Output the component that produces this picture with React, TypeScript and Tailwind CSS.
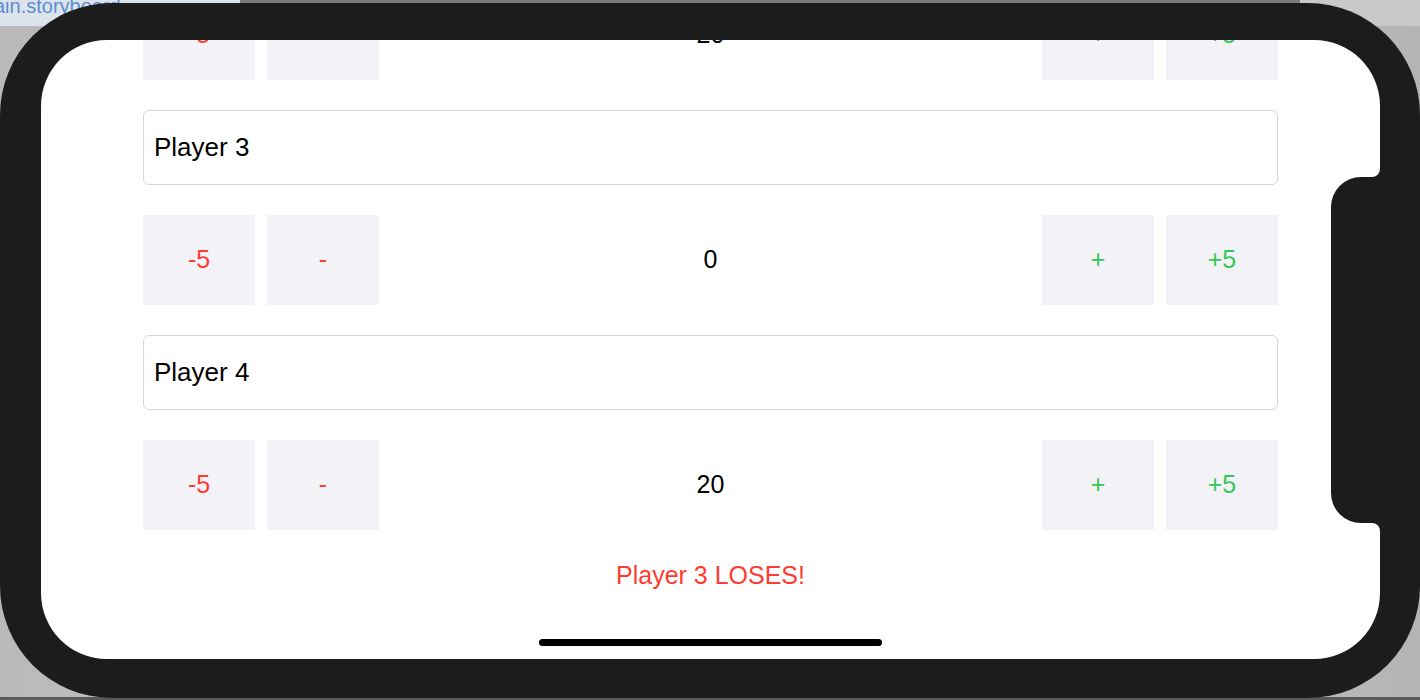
import { useState } from "react";

type Player = { name: string; life: number };

const CounterRow = ({ life }: { life: number }) => {
    return (
        <div className="flex h-[90px] items-stretch gap-3">
            <button className="w-[112px] bg-[#f2f2f7] text-[25px] text-[#ff3b30]">-5</button>
            <button className="w-[112px] bg-[#f2f2f7] text-[25px] text-[#ff3b30]">-</button>
            <div className="flex flex-1 items-center justify-center text-[25px] text-black">{life}</div>
            <button className="w-[112px] bg-[#f2f2f7] text-[25px] text-[#34c759]">+</button>
            <button className="w-[112px] bg-[#f2f2f7] text-[25px] text-[#34c759]">+5</button>
        </div>
    );
};

const NameField = ({ name }: { name: string }) => {
    return (
        <div className="flex h-[75px] items-center rounded-[6px] border border-[#d6d6d9] px-[10px] text-[26px] text-black">
            {name}
        </div>
    );
};

export default function App() {
    const [players] = useState<Player[]>([
        { name: "Player 2", life: 20 },
        { name: "Player 3", life: 0 },
        { name: "Player 4", life: 20 },
    ]);

    return (
        <div
            className="relative h-[700px] w-[1420px] overflow-hidden bg-gradient-to-r from-[#b9b9b9] via-[#d9d9d9] to-[#b4b4b4]"
            style={{ fontFamily: '"Liberation Sans", Arial, sans-serif' }}
        >
            {/* xcode window bits behind the simulator */}
            <div className="absolute left-0 top-0 h-[26px] w-[1420px] bg-[#7c7c7c]" />
            <div className="absolute left-0 top-0 h-[26px] w-[240px] bg-[#dde3ea]" />
            <div className="absolute right-0 top-0 h-[26px] w-[120px] bg-[#c9c9c9]" />
            <div className="absolute left-[-6px] top-[-9px] text-[20px] text-[#5b8fd0]">ain.storyboard</div>
            <div className="absolute bottom-0 left-0 h-[3px] w-[1420px] bg-[#5a5a5a]" />

            <div className="relative mt-[3px] h-[695px] w-[1420px] rounded-[112px] bg-[#1c1c1c] pb-[39px] pl-[41px] pr-[40px] pt-[37px]">
                <div className="relative h-[619px] w-[1339px] overflow-hidden rounded-[66px] bg-white">
                    <div className="ml-[102px] mt-[-50px] flex w-[1135px] flex-col gap-[30px]">
                        <CounterRow life={players[0].life} />
                        {players.slice(1).map((p) => (
                            <div key={p.name} className="flex flex-col gap-[30px]">
                                <NameField name={p.name} />
                                <CounterRow life={p.life} />
                            </div>
                        ))}
                        <div className="text-center text-[25px] leading-[30px] text-[#ff3b30]">Player 3 LOSES!</div>
                    </div>

                    {/* sensor housing */}
                    <div className="absolute right-0 top-[137px] h-[346px] w-[49px] rounded-l-[30px] bg-[#1c1c1c]" />
                    <div className="absolute right-0 top-[129px] h-[8px] w-[8px] bg-[#1c1c1c]" />
                    <div className="absolute right-0 top-[129px] h-[8px] w-[8px] rounded-br-[8px] bg-white" />
                    <div className="absolute right-0 top-[483px] h-[8px] w-[8px] bg-[#1c1c1c]" />
                    <div className="absolute right-0 top-[483px] h-[8px] w-[8px] rounded-tr-[8px] bg-white" />

                    {/* home indicator */}
                    <div className="absolute bottom-[13px] left-[498px] h-[7px] w-[343px] rounded-full bg-black" />
                </div>
            </div>
        </div>
    );
}
